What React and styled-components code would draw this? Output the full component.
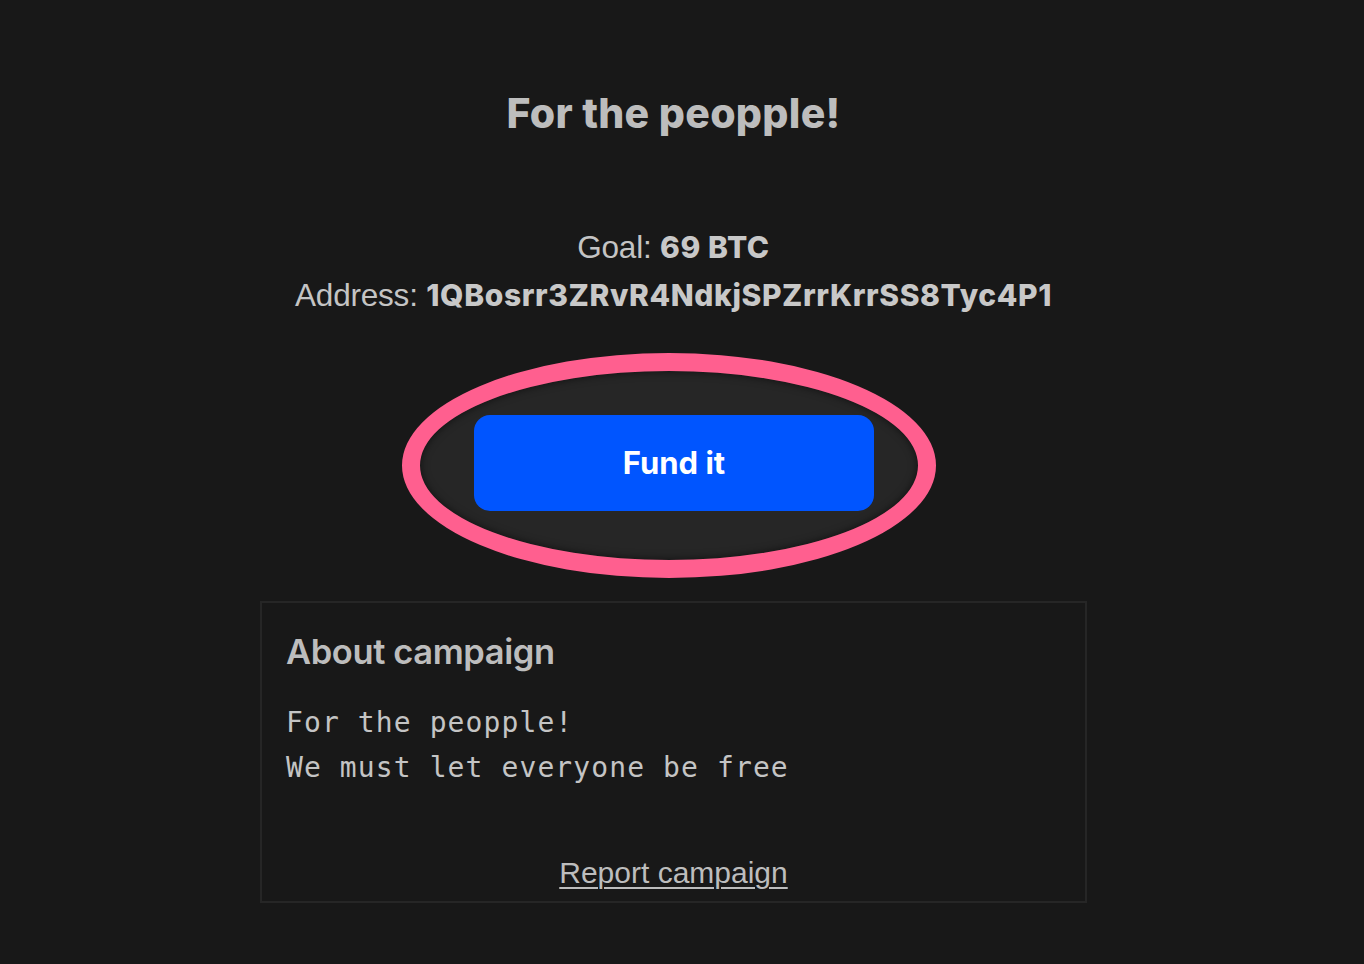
import React from "react";
import styled, { createGlobalStyle } from "styled-components";

const Global = createGlobalStyle`
  html, body { margin: 0; padding: 0; background: #181818; }
  body { font-family: Inter, "Noto Sans", sans-serif; }
`;

const Page = styled.main`
  min-height: 964px;
  box-sizing: border-box;
  padding: 89px 17px 0 0;
  display: flex;
  flex-direction: column;
  align-items: center;
  color: #bdbdbd;
`;

const Title = styled.h1`
  margin: 0;
  font-family: Inter, sans-serif;
  font-weight: 800;
  font-size: 41px;
  line-height: 48px;
  letter-spacing: 0.3px;
  color: #bdbdbd;
`;

const Info = styled.div`
  margin-top: 86px;
  display: flex;
  flex-direction: column;
  align-items: center;
`;

const InfoLine = styled.div`
  font-family: "Liberation Sans", Arial, sans-serif;
  font-size: 31.5px;
  line-height: 48px;
  height: 48px;
  letter-spacing: -0.2px;
  color: #c4c4c4;
  white-space: nowrap;
`;

const Strong = styled.b`
  font-family: Inter, sans-serif;
  font-weight: 800;
  font-size: 30px;
  letter-spacing: 0.6px;
  color: #c8c8c8;
`;

const Highlight = styled.div`
  margin-top: 34px;
  margin-right: 9px;
  width: 534px;
  height: 225px;
  box-sizing: border-box;
  border: 18px solid #ff5f8f;
  border-radius: 50%;
  background: #262626;
  box-shadow: inset 0 0 8px rgba(0, 0, 0, 0.6);
  display: flex;
  align-items: center;
  justify-content: center;
  padding-left: 10px;
`;

const FundButton = styled.button`
  width: 400px;
  height: 96px;
  flex-shrink: 0;
  border: none;
  border-radius: 16px;
  background: #0055ff;
  color: #ffffff;
  font-family: Inter, sans-serif;
  font-weight: 700;
  font-size: 31px;
  letter-spacing: 0;
  cursor: pointer;
  margin-top: -6px;
`;

const Card = styled.section`
  margin-top: 23px;
  width: 827px;
  height: 302px;
  box-sizing: border-box;
  border: 2px solid #262626;
  padding: 29px 24px 11px;
  display: flex;
  flex-direction: column;
`;

const CardTitle = styled.h2`
  margin: 0;
  font-family: Inter, sans-serif;
  font-weight: 600;
  font-size: 34.5px;
  line-height: 40px;
  letter-spacing: -0.4px;
  color: #bdbdbd;
`;

const Description = styled.pre`
  margin: 28px 0 0;
  font-family: "DejaVu Sans Mono", monospace;
  font-size: 28px;
  line-height: 45px;
  letter-spacing: 1.1px;
  color: #c4c4c4;
`;

const ReportLink = styled.a`
  margin-top: auto;
  align-self: center;
  font-family: "Liberation Sans", Arial, sans-serif;
  font-size: 30px;
  line-height: 34px;
  color: #bdbdbd;
  text-decoration: underline;
  text-underline-offset: 4px;
  text-decoration-thickness: 2px;
  cursor: pointer;
`;

export default function App() {
  return (
    <>
      <Global />
      <Page>
        <Title>For the peopple!</Title>
        <Info>
          <InfoLine>
            Goal: <Strong>69 BTC</Strong>
          </InfoLine>
          <InfoLine>
            Address: <Strong>1QBosrr3ZRvR4NdkjSPZrrKrrSS8Tyc4P1</Strong>
          </InfoLine>
        </Info>
        <Highlight>
          <FundButton>Fund it</FundButton>
        </Highlight>
        <Card>
          <CardTitle>About campaign</CardTitle>
          <Description>{"For the peopple!\nWe must let everyone be free"}</Description>
          <ReportLink>Report campaign</ReportLink>
        </Card>
      </Page>
    </>
  );
}
